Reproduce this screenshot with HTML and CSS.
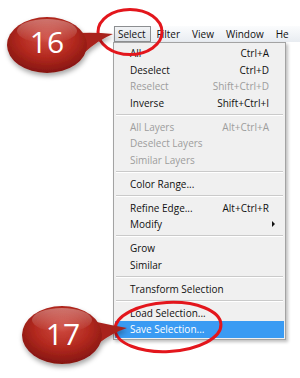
FILE: index.html
```html
<!DOCTYPE html>
<html lang="en">
<head>
    <meta charset="UTF-8">
    <meta name="viewport" content="width=device-width, initial-scale=1.0">
    <title>Select Menu</title>
    <link rel="stylesheet" href="styles.css">
</head>
<body>
    <div class="stage">
        <div class="window">
            <div class="menubar">
                <span class="menu-title open">Select</span>
                <span class="menu-title">Filter</span>
                <span class="menu-title">View</span>
                <span class="menu-title">Window</span>
                <span class="menu-title">He</span>
            </div>
            <ul class="dropdown">
                <li class="item"><span>All</span><span class="key">Ctrl+A</span></li>
                <li class="item"><span>Deselect</span><span class="key">Ctrl+D</span></li>
                <li class="item disabled"><span>Reselect</span><span class="key">Shift+Ctrl+D</span></li>
                <li class="item"><span>Inverse</span><span class="key">Shift+Ctrl+I</span></li>
                <li class="sep"></li>
                <li class="item disabled"><span>All Layers</span><span class="key">Alt+Ctrl+A</span></li>
                <li class="item disabled"><span>Deselect Layers</span></li>
                <li class="item disabled"><span>Similar Layers</span></li>
                <li class="sep"></li>
                <li class="item"><span>Color Range...</span></li>
                <li class="sep"></li>
                <li class="item"><span>Refine Edge...</span><span class="key">Alt+Ctrl+R</span></li>
                <li class="item"><span>Modify</span><span class="arrow"></span></li>
                <li class="sep"></li>
                <li class="item"><span>Grow</span></li>
                <li class="item"><span>Similar</span></li>
                <li class="sep"></li>
                <li class="item"><span>Transform Selection</span></li>
                <li class="sep"></li>
                <li class="item"><span>Load Selection...</span></li>
                <li class="item active"><span>Save Selection...</span></li>
            </ul>
        </div>

        <!-- numbered callouts and red rings drawn over the screenshot -->
        <svg class="callouts" width="300" height="378" viewBox="0 0 300 378">
            <defs>
                <radialGradient id="bubbleFill" cx="50%" cy="38%" r="62%">
                    <stop offset="0%" stop-color="#cf4a40"/>
                    <stop offset="55%" stop-color="#b3291f"/>
                    <stop offset="100%" stop-color="#841510"/>
                </radialGradient>
                <linearGradient id="gloss" x1="0" y1="0" x2="0" y2="1">
                    <stop offset="0%" stop-color="#ffffff" stop-opacity="0.35"/>
                    <stop offset="100%" stop-color="#ffffff" stop-opacity="0"/>
                </linearGradient>
                <filter id="shadow" x="-30%" y="-30%" width="160%" height="170%">
                    <feDropShadow dx="1" dy="3" stdDeviation="2.5" flood-color="#000" flood-opacity="0.35"/>
                </filter>
            </defs>

            <ellipse class="ring" cx="130" cy="32" rx="32" ry="22.5"/>

            <g filter="url(#shadow)">
                <path d="M78 33 Q95 32 113 34 Q98 40 84 53 Z" fill="#a8231c"/>
                <ellipse cx="47" cy="45" rx="40" ry="28" fill="url(#bubbleFill)"/>
            </g>
            <ellipse cx="47" cy="31" rx="30" ry="12" fill="url(#gloss)"/>
            <text class="num" x="47" y="53">16</text>

            <ellipse class="ring" cx="168" cy="327" rx="53" ry="24.5" transform="rotate(-3 168 327)"/>

            <g filter="url(#shadow)">
                <path d="M92 321 Q110 325 127 328 Q112 333 99 343 Z" fill="#a8231c"/>
                <ellipse cx="62" cy="335" rx="40" ry="29" fill="url(#bubbleFill)"/>
            </g>
            <ellipse cx="62" cy="320" rx="30" ry="12" fill="url(#gloss)"/>
            <text class="num" x="63" y="345">17</text>
        </svg>
    </div>
</body>
</html>
```

FILE: styles.css
```css
body {
    margin: 0;
    background-color: #ffffff;
    font-family: "Open Sans", "Noto Sans", Arial, sans-serif;
}

.stage {
    position: relative;
    width: 300px;
    height: 378px;
    overflow: hidden;
}

.window {
    padding-top: 26px;
    padding-left: 113px;
}

.menubar {
    display: flex;
    align-items: center;
    height: 16px;
    width: 187px;
    background: linear-gradient(#fbfcfd, #e8ecf1);
    font-size: 10px;
    color: #111;
    white-space: nowrap;
}

.menu-title {
    padding: 0 5px;
    line-height: 14px;
    border: 1px solid transparent;
}

.menu-title.open {
    margin-left: 1px;
    padding: 0 4px 0 3px;
    border-color: #8c8e90;
    background: linear-gradient(#f2f3f5, #dde1e6);
}

.dropdown {
    list-style: none;
    margin: 0;
    padding: 2px 0 1px;
    width: 171px;
    background-color: #f0f0f0;
    border: 1px solid #a3a3a3;
    box-shadow: 2px 2px 3px rgba(0, 0, 0, 0.25);
    font-size: 10px;
    color: #111;
}

.item {
    display: flex;
    justify-content: space-between;
    align-items: center;
    height: 16.5px;
    padding: 0 15px 0 15px;
    margin: 0 1px;
    white-space: nowrap;
}

.item.disabled {
    color: #9d9d9d;
}

.item.active {
    background-color: #3a9bf3;
    color: #ffffff;
}

.key {
    color: inherit;
}

.arrow {
    width: 0;
    height: 0;
    margin-right: -6px;
    border-top: 3px solid transparent;
    border-bottom: 3px solid transparent;
    border-left: 3px solid #111;
}

.sep {
    height: 7.5px;
    margin: 0 2px;
    display: flex;
    flex-direction: column;
    justify-content: center;
}

.sep::before {
    content: "";
    display: block;
    height: 1px;
    background-color: #cacaca;
    border-bottom: 1px solid #ffffff;
}

.callouts {
    position: absolute;
    left: 0;
    top: 0;
    pointer-events: none;
}

.ring {
    fill: none;
    stroke: #e3161c;
    stroke-width: 3;
}

.num {
    fill: #ffffff;
    font-family: "Open Sans", "Noto Sans", sans-serif;
    font-size: 30px;
    text-anchor: middle;
}
```
